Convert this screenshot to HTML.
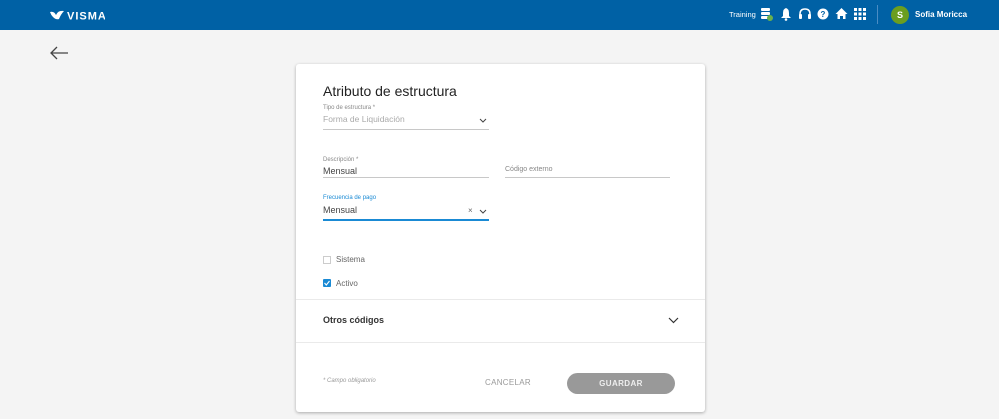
<!DOCTYPE html>
<html><head><meta charset="utf-8"><style>
*{box-sizing:border-box;margin:0;padding:0}
body{width:999px;height:419px;overflow:hidden;background:#f4f4f4;font-family:"Liberation Sans",sans-serif;position:relative}
.hdr{position:absolute;left:0;top:0;width:999px;height:30px;background:#0061a5}
.abs{position:absolute}
.card{position:absolute;left:296px;top:64px;width:409px;height:348px;background:#fff;border-radius:3px;box-shadow:0 1px 3px rgba(0,0,0,.3)}
.lbl{position:absolute;font-size:6px;color:#888}
.val{position:absolute;font-size:9px;color:#444}
.line{position:absolute;height:1px;background:#c8c8c8}
</style></head><body>
<div class="hdr">
  <svg class="abs" style="left:49px;top:9px" width="56" height="12" viewBox="0 0 56 12">
    <path d="M1 3 Q5 2 7 6 Q9 1 15 2 Q12 5 10 10 Q7 11 4 8 Q2 6 1 3Z" fill="#fff"/>
    <text x="18" y="10.5" font-family="Liberation Sans" font-weight="bold" font-size="11" fill="#fff" letter-spacing="1">VISMA</text>
  </svg>
  <div class="abs" style="left:729px;top:10px;font-size:7.5px;color:#fff">Training</div>
  <svg class="abs" style="left:760px;top:7px" width="13" height="14"><rect x="1" y="1" width="9" height="3" rx="1" fill="#fff"/><rect x="1" y="5" width="9" height="3" rx="1" fill="#fff"/><rect x="1" y="9" width="9" height="3" rx="1" fill="#fff"/><circle cx="10" cy="11" r="3" fill="#6ab04c"/></svg>
  <svg class="abs" style="left:780px;top:7px" width="12" height="14"><path d="M6 1 Q9 2 9 6 L9 9 L11 11 L1 11 L3 9 L3 6 Q3 2 6 1Z" fill="#fff"/><circle cx="6" cy="12.5" r="1.3" fill="#fff"/></svg>
  <svg class="abs" style="left:798px;top:7px" width="14" height="14"><path d="M2 9 L2 7 Q2 2 7 2 Q12 2 12 7 L12 9" stroke="#fff" stroke-width="1.5" fill="none"/><rect x="1" y="7" width="3" height="5" rx="1" fill="#fff"/><rect x="10" y="7" width="3" height="5" rx="1" fill="#fff"/></svg>
  <svg class="abs" style="left:817px;top:8px" width="12" height="12"><circle cx="6" cy="6" r="5.5" fill="#fff"/><text x="6" y="9" text-anchor="middle" font-size="8" font-weight="bold" fill="#0061a5" font-family="Liberation Sans">?</text></svg>
  <svg class="abs" style="left:835px;top:7px" width="13" height="13"><path d="M6.5 1 L12.5 7 L10.5 7 L10.5 12 L8 12 L8 9 L5 9 L5 12 L2.5 12 L2.5 7 L0.5 7Z" fill="#fff"/></svg>
  <svg class="abs" style="left:854px;top:8px" width="12" height="12" fill="#fff"><rect x="0" y="0" width="3" height="3"/><rect x="4.5" y="0" width="3" height="3"/><rect x="9" y="0" width="3" height="3"/><rect x="0" y="4.5" width="3" height="3"/><rect x="4.5" y="4.5" width="3" height="3"/><rect x="9" y="4.5" width="3" height="3"/><rect x="0" y="9" width="3" height="3"/><rect x="4.5" y="9" width="3" height="3"/><rect x="9" y="9" width="3" height="3"/></svg>
  <div class="abs" style="left:877px;top:5px;width:1px;height:19px;background:#4a8cc4"></div>
  <div class="abs" style="left:891px;top:6px;width:18px;height:18px;border-radius:50%;background:#6b9e1f;color:#fff;font-size:9px;font-weight:bold;text-align:center;line-height:18px">S</div>
  <div class="abs" style="left:915px;top:10px;font-size:8px;font-weight:bold;color:#fff">Sofia Moricca</div>
</div>
<svg class="abs" style="left:50px;top:46px" width="20" height="14"><path d="M1 7 L18 7 M7 1 L1 7 L7 13" stroke="#444" stroke-width="1.3" fill="none"/></svg>
<div class="card">
  <div class="abs" style="left:27px;top:19px;font-size:14px;color:#222">Atributo de estructura</div>
  <div class="lbl" style="left:27px;top:41px">Tipo de estructura *</div>
  <div class="val" style="left:27px;top:50px;color:#aaa;font-size:8.5px">Forma de Liquidación</div>
  <svg class="abs" style="left:183px;top:54px" width="8" height="5"><path d="M1 1 L4 4 L7 1" stroke="#444" fill="none"/></svg>
  <div class="line" style="left:27px;top:65px;width:166px"></div>
  <div class="lbl" style="left:27px;top:93px">Descripción *</div>
  <div class="val" style="left:27px;top:102px">Mensual</div>
  <div class="line" style="left:27px;top:113px;width:166px"></div>
  <div class="lbl" style="left:209px;top:102px;font-size:7px">Código externo</div>
  <div class="line" style="left:209px;top:113px;width:165px"></div>
  <div class="lbl" style="left:27px;top:131px;color:#1a8ad4">Frecuencia de pago</div>
  <div class="val" style="left:27px;top:141px">Mensual</div>
  <div class="abs" style="left:172px;top:142px;font-size:8px;color:#666">×</div>
  <svg class="abs" style="left:183px;top:145px" width="8" height="5"><path d="M1 1 L4 4 L7 1" stroke="#444" fill="none"/></svg>
  <div class="abs" style="left:27px;top:155px;width:166px;height:1.5px;background:#1a8ad4"></div>
  <div class="abs" style="left:27px;top:192px;width:8px;height:8px;border:1px solid #ccc"></div>
  <div class="abs" style="left:40px;top:191px;font-size:8px;color:#666">Sistema</div>
  <div class="abs" style="left:27px;top:215px;width:8px;height:8px;background:#1a8ad4;border-radius:1px"></div>
  <svg class="abs" style="left:27px;top:215px" width="8" height="8"><path d="M1.5 4 L3.3 6 L6.5 2" stroke="#fff" stroke-width="1.1" fill="none"/></svg>
  <div class="abs" style="left:40px;top:215px;font-size:8px;color:#666">Activo</div>
  <div class="line" style="left:0;top:235px;width:409px;background:#eaeaea"></div>
  <div class="abs" style="left:27px;top:251px;font-size:9px;font-weight:bold;color:#333">Otros códigos</div>
  <svg class="abs" style="left:372px;top:253px" width="11" height="7"><path d="M1 1 L5.5 5.5 L10 1" stroke="#333" stroke-width="1.2" fill="none"/></svg>
  <div class="line" style="left:0;top:278px;width:409px;background:#eaeaea"></div>
  <div class="abs" style="left:27px;top:314px;font-size:6px;font-style:italic;color:#999">* Campo obligatorio</div>
  <div class="abs" style="left:189px;top:314px;font-size:8px;color:#999;letter-spacing:.3px">CANCELAR</div>
  <div class="abs" style="left:271px;top:309px;width:108px;height:21px;border-radius:11px;background:#999;color:#eee;font-size:8px;font-weight:bold;text-align:center;line-height:21px;letter-spacing:.4px">GUARDAR</div>
</div>
</body></html>
